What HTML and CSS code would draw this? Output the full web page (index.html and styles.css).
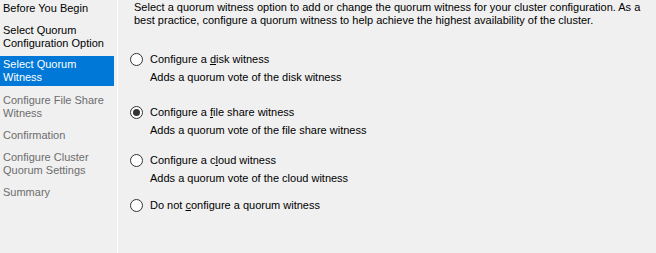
FILE: index.html
```html
<!DOCTYPE html>
<html>
<head>
<meta charset="utf-8">
<link rel="stylesheet" href="styles.css">
</head>
<body>
<div class="wizard">
  <nav class="steps">
    <div class="step">Before You Begin</div>
    <div class="step">Select Quorum<br>Configuration Option</div>
    <div class="step step--active">Select Quorum<br>Witness</div>
    <div class="step step--disabled">Configure File Share<br>Witness</div>
    <div class="step step--disabled">Confirmation</div>
    <div class="step step--disabled">Configure Cluster<br>Quorum Settings</div>
    <div class="step step--disabled">Summary</div>
  </nav>
  <div class="divider"></div>
  <main class="content">
    <p class="intro">Select a quorum witness option to add or change the quorum witness for your cluster configuration. As a<br>best practice, configure a quorum witness to help achieve the highest availability of the cluster.</p>
    <div class="options">
      <div class="option">
        <div class="option-row"><span class="radio"></span><span class="label">Configure a <u>d</u>isk witness</span></div>
        <div class="desc">Adds a quorum vote of the disk witness</div>
      </div>
      <div class="option">
        <div class="option-row"><span class="radio radio--checked"></span><span class="label">Configure a <u>f</u>ile share witness</span></div>
        <div class="desc">Adds a quorum vote of the file share witness</div>
      </div>
      <div class="option">
        <div class="option-row"><span class="radio"></span><span class="label">Configure a c<u>l</u>oud witness</span></div>
        <div class="desc">Adds a quorum vote of the cloud witness</div>
      </div>
      <div class="option">
        <div class="option-row"><span class="radio"></span><span class="label">Do not <u>c</u>onfigure a quorum witness</span></div>
      </div>
    </div>
  </main>
</div>
</body>
</html>
```

FILE: styles.css
```css
html, body {
  margin: 0;
  padding: 0;
  background: #f0f0f0;
}
body {
  font-family: "Liberation Sans", Arial, sans-serif;
  font-size: 11px;
  line-height: 13px;
  color: #000;
}
.wizard {
  display: flex;
  width: 656px;
  height: 253px;
  overflow: hidden;
}
.steps {
  width: 114px;
  margin-right: 3px;
  display: flex;
  flex-direction: column;
  gap: 5px;
  padding-top: 0;
  flex: none;
}
.step {
  padding: 2px 0 2px 3px;
  white-space: nowrap;
}
.step:nth-child(3) {
  margin-top: -1px;
}
.step:nth-child(4) {
  margin-top: 1px;
}
.step--active {
  background: #0078d7;
  color: #fff;
}
.step--disabled {
  color: #6d6d6d;
}
.divider {
  width: 1px;
  background: #fff;
  flex: none;
}
.content {
  flex: 1;
  padding: 1px 0 0 16px;
}
.intro {
  margin: 0;
  white-space: nowrap;
}
.options {
  margin-left: -4px;
  display: flex;
  flex-direction: column;
}
.option:nth-child(1) { margin-top: 26px; }
.option:nth-child(2) { margin-top: 22px; }
.option:nth-child(3) { margin-top: 17px; }
.option:nth-child(4) { margin-top: 14px; }
.option-row {
  display: flex;
  align-items: center;
  height: 13px;
}
.radio {
  box-sizing: border-box;
  width: 13px;
  height: 13px;
  border: 1px solid #333;
  border-radius: 50%;
  background: #fff;
  margin-right: 7px;
  position: relative;
  flex: none;
}
.radio--checked::after {
  content: "";
  position: absolute;
  left: 2px;
  top: 2px;
  width: 7px;
  height: 7px;
  border-radius: 50%;
  background: #333;
}
.label u, .desc u {
  text-decoration: underline;
}
.desc {
  margin-top: 5px;
  padding-left: 20px;
}
```
